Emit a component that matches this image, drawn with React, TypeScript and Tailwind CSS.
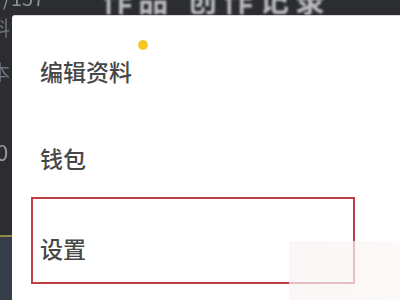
export default function App() {
  return (
    <div className="relative flex h-[300px] w-[400px] flex-col overflow-hidden bg-[#2b2d31] font-['Noto_Sans_CJK_SC',sans-serif]">
      {/* top bar, text cut off by the sheet */}
      <div className="flex h-[15px] shrink-0 items-start overflow-hidden">
        <span className="ml-[-8px] -translate-y-[12px] text-[20px] leading-[20px] text-[#8d9096] blur-[0.6px]">7/157</span>
        <span className="ml-[58px] -translate-y-[17px] text-[30px] font-bold leading-[30px] tracking-[6px] text-[#b9babd] blur-[1.2px]">
          作品 创作记录
        </span>
      </div>

      <div className="flex flex-1">
        {/* peeking strip on the left */}
        <div className="flex w-[12px] flex-col overflow-hidden text-[#6f737a]">
          <span className="mt-[2px] ml-[-10px] text-[20px] leading-[22px] blur-[0.5px]">料</span>
          <span className="mt-[22px] ml-[-10px] text-[20px] leading-[22px] blur-[0.5px]">本</span>
          <span className="mt-[56px] ml-[-4px] text-[22px] leading-[24px] text-[#9a9da3] blur-[0.5px]">0</span>
          <div className="mt-[72px] h-[2px] bg-[#8c8a45]" />
          <div className="flex-1 bg-[#363c48]" />
        </div>

        {/* white sheet */}
        <div className="flex flex-1 flex-col rounded-tl-[3px] border-t border-[#d9d9d9] bg-white text-[23px] font-medium leading-[24px] text-[#474747]">
          <div className="ml-[28px] mt-[43px]">编辑资料</div>
          <div className="ml-[28px] mt-[63px]">钱包</div>
          <div className="ml-[19px] mt-[27px] h-[87px] w-[324px] border-2 border-[#bf3f45] pl-[7px] pt-[37px]">设置</div>
        </div>
      </div>

      {/* unread dot */}
      <span className="absolute left-[138px] top-[40px] h-[10px] w-[10px] rounded-full bg-[#f7c928]" />
      {/* faint watermark patch */}
      <div className="absolute left-[289px] top-[241px] h-[59px] w-[111px] bg-gradient-to-r from-[#faf2f2] to-[#fcf7f7] opacity-70" />
    </div>
  );
}
